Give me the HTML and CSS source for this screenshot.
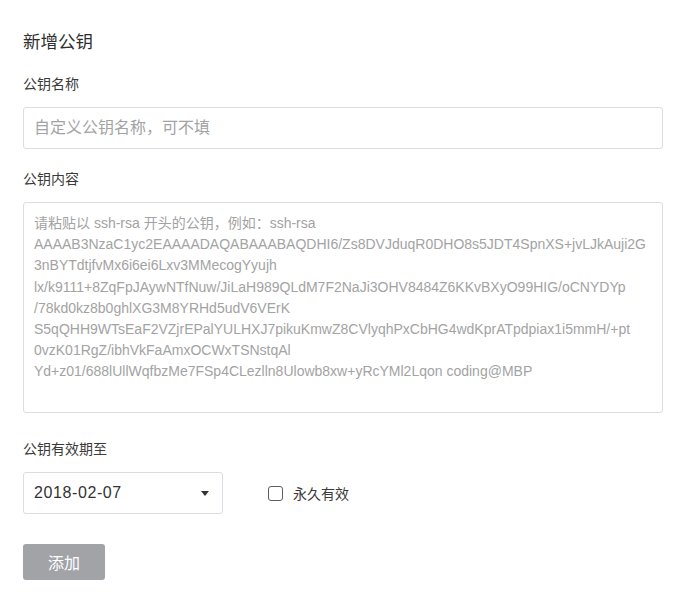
FILE: index.html
```html
<!DOCTYPE html>
<html lang="zh-CN">
<head>
<meta charset="utf-8">
<link rel="stylesheet" href="styles.css">
</head>
<body>
<div class="page">
  <h1 class="title">新增公钥</h1>
  <div class="field">
    <label class="label">公钥名称</label>
    <input class="input" type="text" placeholder="自定义公钥名称，可不填">
  </div>
  <div class="field field-content">
    <label class="label">公钥内容</label>
    <textarea class="textarea" placeholder="请粘贴以 ssh-rsa 开头的公钥，例如：ssh-rsa&#10;AAAAB3NzaC1yc2EAAAADAQABAAABAQDHI6/Zs8DVJduqR0DHO8s5JDT4SpnXS+jvLJkAuji2G&#10;3nBYTdtjfvMx6i6ei6Lxv3MMecogYyujh&#10;lx/k9111+8ZqFpJAywNTfNuw/JiLaH989QLdM7F2NaJi3OHV8484Z6KKvBXyO99HIG/oCNYDYp&#10;/78kd0kz8b0ghlXG3M8YRHd5udV6VErK&#10;S5qQHH9WTsEaF2VZjrEPalYULHXJ7pikuKmwZ8CVlyqhPxCbHG4wdKprATpdpiax1i5mmH/+pt&#10;0vzK01RgZ/ibhVkFaAmxOCWxTSNstqAl&#10;Yd+z01/688lUllWqfbzMe7FSp4CLezlln8Ulowb8xw+yRcYMl2Lqon coding@MBP"></textarea>
  </div>
  <div class="field field-date">
    <label class="label">公钥有效期至</label>
    <div class="date-row">
      <div class="select">
        <span class="select-value">2018-02-07</span>
        <span class="caret"></span>
      </div>
      <label class="check">
        <span class="checkbox"></span>
        <span class="check-text">永久有效</span>
      </label>
    </div>
  </div>
  <button class="btn" type="button">添加</button>
</div>
</body>
</html>
```

FILE: styles.css
```css
* { box-sizing: border-box; }
html, body { margin: 0; padding: 0; background: #fff; }
body {
  font-family: "Liberation Sans", "Noto Sans CJK SC", sans-serif;
  color: #333;
}
.page {
  padding: 30px 25px 0 23px;
  width: 688px;
}
.title {
  margin: 0;
  font-size: 17.5px;
  font-weight: normal;
  line-height: 24px;
  color: #2f2f2f;
}
.field { margin-top: 20px; }
.field-date { margin-top: 26px; }
.label {
  display: block;
  font-size: 14px;
  line-height: 20px;
  color: #3a3a3a;
}
.input {
  display: block;
  margin-top: 13px;
  width: 100%;
  height: 42px;
  border: 1px solid #dcdde3;
  border-radius: 3px;
  padding: 0 10px;
  font-family: inherit;
  font-size: 16px;
  color: #333;
  outline: none;
}
.input::placeholder, .textarea::placeholder { color: #a3a3a3; opacity: 1; }
.field-content { margin-top: 20px; }
.textarea {
  display: block;
  margin-top: 13px;
  width: 100%;
  height: 211px;
  border: 1px solid #dcdde3;
  border-radius: 3px;
  padding: 10px 10px 9px;
  font-family: inherit;
  font-size: 14px;
  line-height: 21.2px;
  resize: none;
  outline: none;
  white-space: pre;
  overflow: hidden;
}
.date-row {
  margin-top: 13px;
  display: flex;
  align-items: center;
}
.select {
  width: 200px;
  height: 42px;
  border: 1px solid #dcdde3;
  border-radius: 3px;
  padding: 0 13px 0 10px;
  display: flex;
  align-items: center;
  justify-content: space-between;
}
.select-value { font-size: 16px; letter-spacing: 0.6px; color: #333; }
.caret {
  width: 0;
  height: 0;
  border-left: 4.5px solid transparent;
  border-right: 4.5px solid transparent;
  border-top: 5px solid #333;
}
.check {
  margin-left: 45px;
  display: flex;
  align-items: center;
}
.checkbox {
  width: 15px;
  height: 15px;
  border: 1px solid #5e5e5e;
  border-radius: 3px;
}
.check-text {
  margin-left: 10px;
  font-size: 14px;
  color: #3a3a3a;
}
.btn {
  display: block;
  margin-top: 30px;
  width: 82px;
  height: 36px;
  border: none;
  border-radius: 3px;
  background: #a2a3a7;
  color: #fff;
  font-family: inherit;
  font-size: 16px;
  padding: 0;
}
```
